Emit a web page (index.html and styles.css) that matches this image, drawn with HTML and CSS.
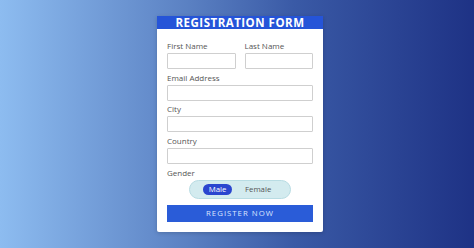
FILE: index.html
```html
<!DOCTYPE html>
<html lang="en">
<head>
<meta charset="utf-8">
<title>Registration Form</title>
<link rel="stylesheet" href="styles.css">
</head>
<body>
<main class="page">
  <form class="card">
    <h1 class="card-title">REGISTRATION FORM</h1>
    <div class="card-body">
      <div class="row">
        <div class="field">
          <label class="label">First Name</label>
          <input class="input" type="text">
        </div>
        <div class="field">
          <label class="label">Last Name</label>
          <input class="input" type="text">
        </div>
      </div>
      <div class="field">
        <label class="label">Email Address</label>
        <input class="input" type="text">
      </div>
      <div class="field">
        <label class="label">City</label>
        <input class="input" type="text">
      </div>
      <div class="field">
        <label class="label">Country</label>
        <input class="input" type="text">
      </div>
      <div class="field">
        <span class="label">Gender</span>
        <div class="toggle">
          <span class="toggle-opt active">Male</span>
          <span class="toggle-opt">Female</span>
        </div>
      </div>
      <button class="submit" type="button">REGISTER NOW</button>
    </div>
  </form>
</main>
</body>
</html>
```
FILE: styles.css
```css
* { box-sizing: border-box; }
html, body { margin: 0; padding: 0; height: 100%; }
body {
  font-family: "Open Sans", "Noto Sans", sans-serif;
  background: linear-gradient(to right, #8dbcf0 0%, #5a80c2 40%, #3a5aa6 62%, #1e3285 100%);
}
.page {
  height: 248px;
  display: flex;
  justify-content: center;
  padding-top: 16px;
  padding-left: 6px;
}
.card {
  width: 166px;
  height: 216px;
  background: #fff;
  border-radius: 0 0 2px 2px;
  box-shadow: 0 1px 4px rgba(0, 0, 0, 0.18);
  margin: 0;
}
.card-title {
  margin: 0;
  height: 13px;
  background: #2554d8;
  color: #fff;
  font-size: 11.5px;
  font-weight: 700;
  line-height: 13px;
  text-align: center;
  letter-spacing: 0.5px;
}
.card-body {
  padding: 12px 10px 10px 10px;
  display: flex;
  flex-direction: column;
}
.row {
  display: flex;
  gap: 9px;
}
.row .field { flex: 1; }
.field {
  display: flex;
  flex-direction: column;
  margin-bottom: 3.7px;
}
.label {
  font-size: 8px;
  line-height: 10px;
  color: #555;
  margin-bottom: 2px;
}
.input {
  height: 16px;
  width: 100%;
  border: 1px solid #cfcfcf;
  border-radius: 1px;
  background: #fff;
  margin: 0;
  padding: 0 4px;
  font: inherit;
}
.toggle {
  align-self: center;
  width: 102px;
  height: 19px;
  border-radius: 10px;
  background: #d3ebef;
  border: 1px solid #b8dce3;
  display: flex;
  align-items: center;
  padding-left: 13px;
  gap: 13px;
}
.toggle-opt {
  font-size: 7.8px;
  color: #555;
  line-height: 11px;
}
.toggle-opt.active {
  background: #2a46cf;
  color: #fff;
  border-radius: 6px;
  width: 29px;
  text-align: center;
}
.submit {
  margin-top: 2.3px;
  height: 17px;
  width: 100%;
  border: none;
  background: #2a5cd8;
  color: #dbe6ff;
  font-family: inherit;
  font-size: 7.8px;
  letter-spacing: 1px;
  padding: 0;
}
```
